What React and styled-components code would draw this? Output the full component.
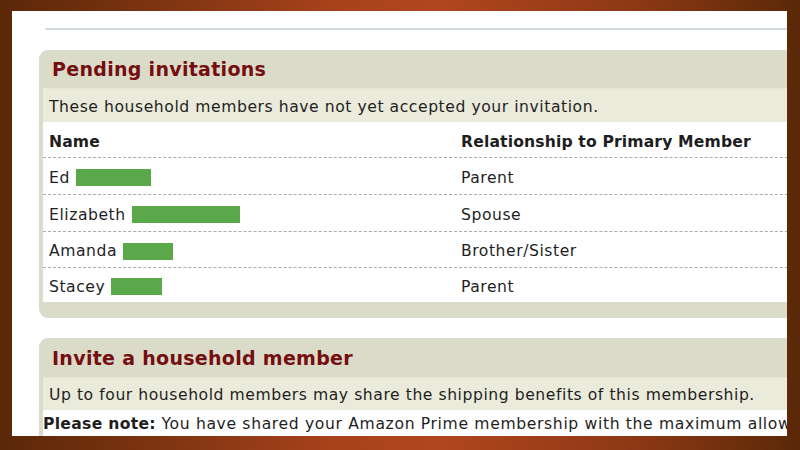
import React from 'react';
import styled, { createGlobalStyle } from 'styled-components';

const GlobalStyle = createGlobalStyle`
	html, body {
		margin: 0;
		padding: 0;
	}
	body {
		font-family: "DejaVu Sans", Verdana, sans-serif;
		color: #1e1e1e;
	}
`

//Brown frame around the page shot

const Frame = styled.div`
	width: 800px;
	height: 450px;
	box-sizing: border-box;
	padding: 11px 13px 14px 12px;
	overflow: hidden;
	background: linear-gradient(90deg, #5a2808 0%, #7a3310 18%, #a8421c 42%, #b0461f 55%, #8c3814 80%, #5a2808 100%);
`

const Page = styled.div`
	height: 100%;
	background: #ffffff;
	overflow: hidden;
	display: flex;
	flex-direction: column;
`

const TopRule = styled.div`
	margin: 17px 0 0 33px;
	height: 2px;
	background: #d3dce3;
	flex-shrink: 0;
`

const Panel = styled.section`
	flex-shrink: 0;
	width: 800px;
	margin: ${props => props.top}px 0 0 27px;
	background: #dbdbca;
	border-radius: 9px;
	padding: 0 4px ${props => props.bottom}px 4px;
`

const PanelTitle = styled.h2`
	margin: 0;
	height: ${props => props.h}px;
	display: flex;
	align-items: center;
	padding-left: 9px;
	font-size: 19px;
	font-weight: bold;
	letter-spacing: 0.3px;
	color: #740e0f;
`

const PanelNote = styled.div`
	height: ${props => props.h}px;
	display: flex;
	align-items: center;
	padding: 2px 0 0 6px;
	background: #ebebdb;
	border-top: 1px solid #e6e6d6;
	font-size: 15.6px;
	letter-spacing: 0.56px;
	box-sizing: border-box;
`

const Table = styled.div`
	background: #ffffff;
`

const Row = styled.div`
	display: grid;
	grid-template-columns: 412px 1fr;
	box-sizing: border-box;
	height: ${props => props.h}px;
	align-items: center;
	padding-top: ${props => props.head ? '4px' : '3px'};
	border-bottom: ${props => props.last ? 'none' : '1px dashed #ababab'};
	font-size: 15.6px;
	font-weight: ${props => props.head ? 'bold' : 'normal'};
	letter-spacing: ${props => props.head ? '0.15px' : '0.55px'};
`

const Cell = styled.div`
	padding-left: 6px;
	display: flex;
	align-items: center;
	white-space: nowrap;
`

const Redacted = styled.span`
	display: inline-block;
	width: ${props => props.w}px;
	height: 17px;
	margin-left: 6px;
	background: #5aa84a;
`

const NoteLine = styled.div`
	background: #ffffff;
	height: 40px;
	padding: 5px 0 0 0;
	font-size: 15.6px;
	letter-spacing: 0.65px;
	white-space: nowrap;
	box-sizing: border-box;

	b {
		font-weight: bold;
		letter-spacing: 0.3px;
	}
`

const members = [
	{ name: 'Ed', bar: 75, relation: 'Parent', h: 37 },
	{ name: 'Elizabeth', bar: 108, relation: 'Spouse', h: 37 },
	{ name: 'Amanda', bar: 50, relation: 'Brother/Sister', h: 36 },
	{ name: 'Stacey', bar: 51, relation: 'Parent', h: 34 }
];

export default function App() {

	let rows = members.map(function(m, i){
		return (
			<Row key={m.name} h={m.h} last={i === members.length - 1}>
				<Cell>{m.name}<Redacted w={m.bar} /></Cell>
				<Cell>{m.relation}</Cell>
			</Row>
		);
	});

	return (
		<Frame>
			<GlobalStyle />
			<Page>

				<TopRule />

				<Panel top={20} bottom={16}>
					<PanelTitle h={38}>Pending invitations</PanelTitle>
					<PanelNote h={34}>These household members have not yet accepted your invitation.</PanelNote>
					<Table>
						<Row head h={36}>
							<Cell>Name</Cell>
							<Cell>Relationship to Primary Member</Cell>
						</Row>
						{rows}
					</Table>
				</Panel>

				<Panel top={20} bottom={0}>
					<PanelTitle h={39}>Invite a household member</PanelTitle>
					<PanelNote h={33}>Up to four household members may share the shipping benefits of this membership.</PanelNote>
					<NoteLine>
						<b>Please note:</b> You have shared your Amazon Prime membership with the maximum allowed number of household members.
					</NoteLine>
				</Panel>

			</Page>
		</Frame>
	);

}
